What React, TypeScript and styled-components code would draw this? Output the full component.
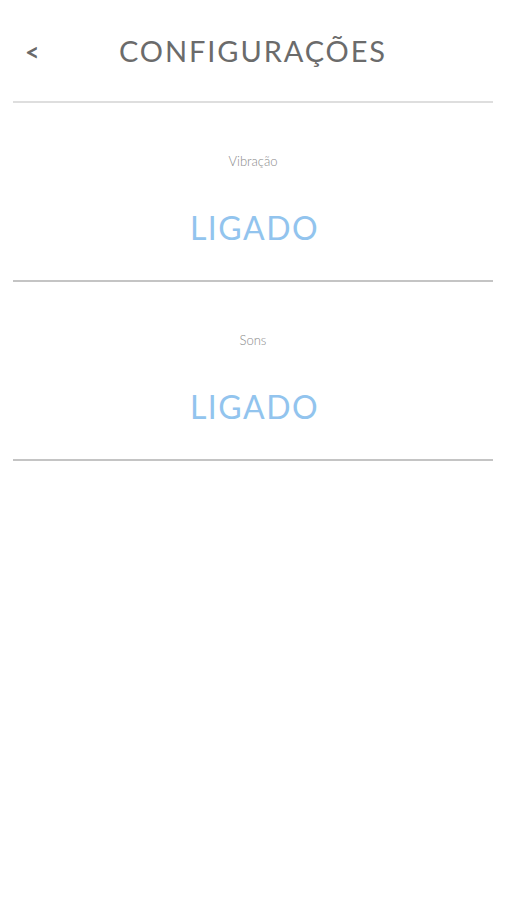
import React from "react";
import styled, { createGlobalStyle } from "styled-components";

const Global = createGlobalStyle`
  html, body { margin: 0; padding: 0; background: #ffffff; }
  body { font-family: Lato, "Open Sans", sans-serif; }
`;

const Page = styled.div`
  width: 506px;
  display: flex;
  flex-direction: column;
`;

const Header = styled.header`
  height: 101px;
  display: grid;
  grid-template-columns: 60px 1fr 60px;
  align-items: center;
  box-sizing: border-box;
`;

const Back = styled.button`
  border: none;
  background: none;
  padding: 0 0 0 25px;
  margin: 0;
  font-family: Lato, sans-serif;
  font-size: 25px;
  font-weight: 700;
  color: #6a6a6a;
  text-align: left;
  cursor: pointer;
`;

const Title = styled.h1`
  margin: 0;
  text-align: center;
  font-family: Lato, sans-serif;
  font-weight: 400;
  font-size: 29px;
  letter-spacing: 1.9px;
  color: #6b6b6b;
`;

const Divider = styled.hr<{ $tone: string }>`
  margin: 0 13px;
  border: none;
  height: 2px;
  background: ${(p) => p.$tone};
`;

const Section = styled.section`
  height: 177px;
  display: flex;
  flex-direction: column;
  align-items: center;
  padding-top: 50px;
  box-sizing: border-box;
`;

const Label = styled.div`
  font-family: Lato, sans-serif;
  font-size: 13px;
  font-weight: 300;
  line-height: 16px;
  color: #8a8a8a;
`;

const Value = styled.div`
  margin-top: 41px;
  padding-left: 3px;
  font-family: Lato, sans-serif;
  font-size: 32px;
  font-weight: 400;
  line-height: 36px;
  letter-spacing: 1.5px;
  color: #92c4ee;
`;

const settings = [
  { label: "Vibração", value: "LIGADO" },
  { label: "Sons", value: "LIGADO" },
];

export default function App() {
  return (
    <Page>
      <Global />
      <Header>
        <Back aria-label="Voltar">&lt;</Back>
        <Title>CONFIGURAÇÕES</Title>
        <span />
      </Header>
      <Divider $tone="#dedede" />
      {settings.map((s) => (
        <React.Fragment key={s.label}>
          <Section>
            <Label>{s.label}</Label>
            <Value>{s.value}</Value>
          </Section>
          <Divider $tone="#c4c4c4" />
        </React.Fragment>
      ))}
    </Page>
  );
}
